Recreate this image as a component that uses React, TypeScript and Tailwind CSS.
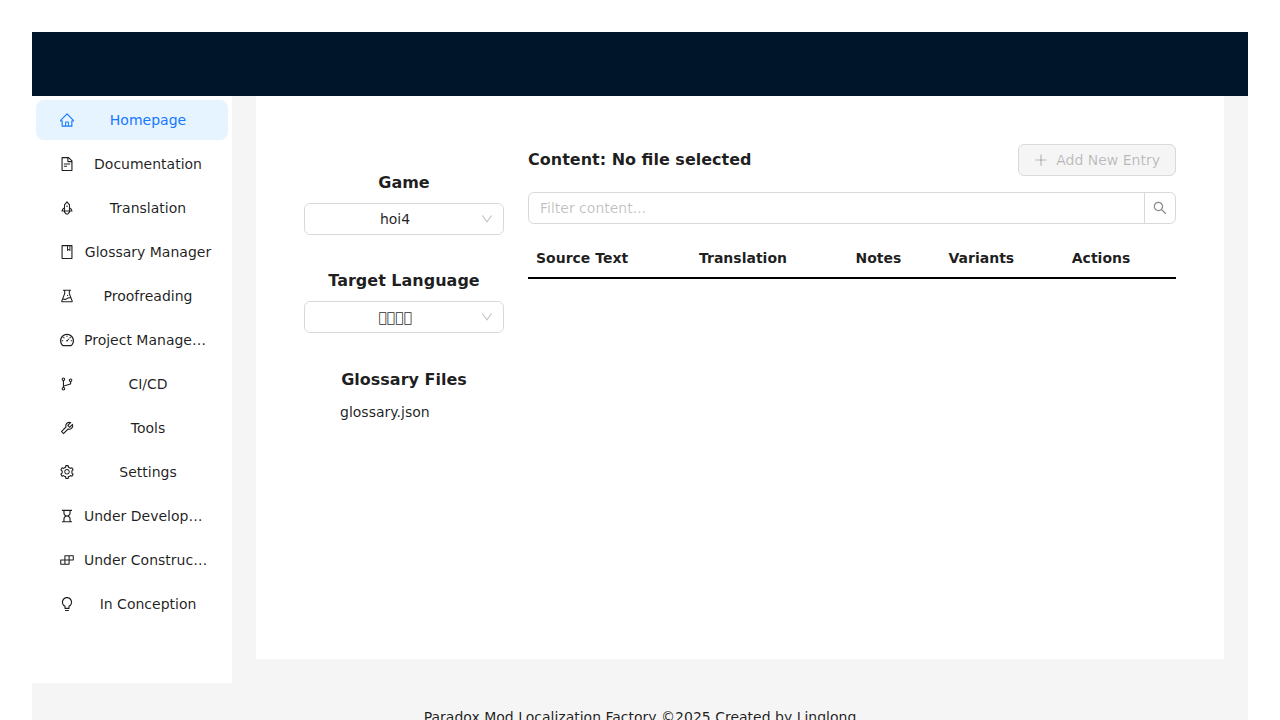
import type { ReactNode } from 'react';
import type { IconType } from 'react-icons';
import {
  AiOutlineBook,
  AiOutlineBranches,
  AiOutlineBuild,
  AiOutlineBulb,
  AiOutlineDashboard,
  AiOutlineDown,
  AiOutlineExperiment,
  AiOutlineFileText,
  AiOutlineHome,
  AiOutlineHourglass,
  AiOutlinePlus,
  AiOutlineRocket,
  AiOutlineSearch,
  AiOutlineSetting,
  AiOutlineTool,
} from 'react-icons/ai';

// Trims the empty margin that surrounds each Ant Design glyph.
const ICON_BOX = '64 64 896 896';

const menu: { label: string; icon: IconType }[] = [
  { label: 'Homepage', icon: AiOutlineHome },
  { label: 'Documentation', icon: AiOutlineFileText },
  { label: 'Translation', icon: AiOutlineRocket },
  { label: 'Glossary Manager', icon: AiOutlineBook },
  { label: 'Proofreading', icon: AiOutlineExperiment },
  { label: 'Project Management', icon: AiOutlineDashboard },
  { label: 'CI/CD', icon: AiOutlineBranches },
  { label: 'Tools', icon: AiOutlineTool },
  { label: 'Settings', icon: AiOutlineSetting },
  { label: 'Under Development', icon: AiOutlineHourglass },
  { label: 'Under Construction', icon: AiOutlineBuild },
  { label: 'In Conception', icon: AiOutlineBulb },
];

function Sidebar() {
  return (
    <nav className="w-[200px] shrink-0 bg-white p-1">
      <ul className="flex flex-col gap-1">
        {menu.map(({ label, icon: Icon }, i) => (
          <li
            key={label}
            className={`flex h-10 items-center rounded-lg pr-4 pl-6 ${
              i === 0 ? 'bg-[#e6f4ff] text-[#1677ff]' : ''
            }`}
          >
            <Icon viewBox={ICON_BOX} className="size-3.5 shrink-0" />
            <span className="ml-2.5 min-w-0 flex-1 truncate text-center">{label}</span>
          </li>
        ))}
      </ul>
    </nav>
  );
}

function Heading({ children }: { children: ReactNode }) {
  return <h5 className="text-center text-base leading-6 font-bold">{children}</h5>;
}

function Select({ value }: { value: string }) {
  return (
    <div className="flex h-8 items-center rounded-md border border-[#d9d9d9] px-2.5">
      <span className="flex-1 pr-1.5 text-center">{value}</span>
      <AiOutlineDown viewBox={ICON_BOX} className="size-3 text-black/25" />
    </div>
  );
}

function FileSidebar() {
  return (
    <aside className="w-[200px] shrink-0 pt-[27px]">
      <Heading>Game</Heading>
      <div className="mt-2">
        <Select value="hoi4" />
      </div>
      <div className="mt-[34px]">
        <Heading>Target Language</Heading>
      </div>
      <div className="mt-2">
        <Select value={'\uE900\uE900\uE900\uE900'} />
      </div>
      <div className="mt-[35px]">
        <Heading>Glossary Files</Heading>
      </div>
      <div className="mt-2 pl-9 leading-6">glossary.json</div>
    </aside>
  );
}

function Entries() {
  return (
    <section className="flex-1">
      <div className="flex h-8 items-center justify-between">
        <h5 className="text-base leading-6 font-bold">Content: No file selected</h5>
        <button
          disabled
          className="flex h-8 items-center gap-2 rounded-md border border-[#d9d9d9] bg-black/4 px-[15px] text-black/25"
        >
          <AiOutlinePlus viewBox={ICON_BOX} className="size-3.5" />
          Add New Entry
        </button>
      </div>
      <div className="mt-4 flex h-8 rounded-md border border-[#d9d9d9]">
        <input
          placeholder="Filter content..."
          className="min-w-0 flex-1 px-[11px] outline-none placeholder:text-black/25"
        />
        <button className="flex w-[31px] items-center justify-center border-l border-[#d9d9d9] text-black/45">
          <AiOutlineSearch viewBox={ICON_BOX} className="size-3.5" />
        </button>
      </div>
      <table className="mt-4 w-full table-fixed border-separate border-spacing-0 text-left">
        <thead>
          <tr className="h-[39px] *:border-b-2 *:border-black *:px-2 *:pb-0.5 *:font-bold">
            <th className="w-[163px]">Source Text</th>
            <th className="w-[156.5px]">Translation</th>
            <th className="w-[93px]">Notes</th>
            <th className="w-[123.25px]">Variants</th>
            <th>Actions</th>
          </tr>
        </thead>
      </table>
    </section>
  );
}

export default function App() {
  return (
    <div className="h-screen overflow-hidden bg-white px-8 pt-8 font-['DejaVu_Sans',sans-serif] text-sm leading-[22px] text-black/88">
      <div className="bg-[#f5f5f5]">
        <header className="h-16 bg-[#001529]" />
        <div className="flex h-[587px]">
          <Sidebar />
          <main className="mx-6 mb-6 flex flex-1 gap-6 bg-white p-12">
            <FileSidebar />
            <Entries />
          </main>
        </div>
        <footer className="px-12 pt-[23px] pb-6 text-center">
          Paradox Mod Localization Factory ©2025 Created by Linglong
        </footer>
      </div>
    </div>
  );
}
